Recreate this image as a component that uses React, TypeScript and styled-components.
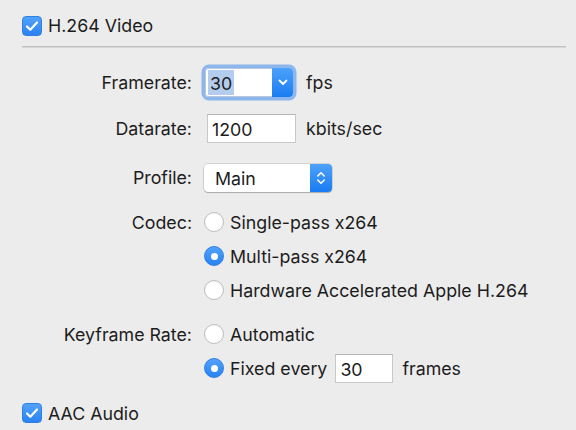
import React from 'react'
import styled, { createGlobalStyle } from 'styled-components'

const GlobalStyle = createGlobalStyle`
  html, body {
    margin: 0;
    padding: 0;
    background: #ececec;
  }
  body {
    font-family: Inter, "Liberation Sans", sans-serif;
    font-size: 17.8px;
    color: #1c1c1c;
  }
`

const Panel = styled.div`
  width: 576px;
  height: 430px;
  box-sizing: border-box;
  padding: 9px 10px 0 22px;
  display: flex;
  flex-direction: column;
  overflow: hidden;
`

const SectionHeader = styled.label<{ $top?: number }>`
  display: flex;
  align-items: center;
  gap: 6px;
  height: 34px;
  margin-top: ${p => p.$top ?? 0}px;
`

const Divider = styled.div`
  margin-top: 3px;
  height: 1px;
  background: #c2c2c2;
  box-shadow: 0 1px 0 #d6d6d6;
`

const CheckBox = styled.span`
  width: 20px;
  height: 20px;
  box-sizing: border-box;
  border-radius: 4px;
  background: linear-gradient(#52a2f9, #2a82f2);
  border: 1px solid #2f7fe6;
  display: flex;
  align-items: center;
  justify-content: center;
  flex-shrink: 0;
`

const Field = styled.div<{ $top: number }>`
  display: flex;
  margin-top: ${p => p.$top}px;
`

const FieldLabel = styled.div`
  width: 170px;
  height: 34px;
  line-height: 36px;
  text-align: right;
  flex-shrink: 0;
`

const Controls = styled.div`
  margin-left: 12px;
  display: flex;
  flex-direction: column;
`

const ControlRow = styled.div`
  display: flex;
  align-items: center;
  height: 34px;
`

const Unit = styled.span<{ $gap: number }>`
  margin-left: ${p => p.$gap}px;
`

const ComboBox = styled.div`
  display: flex;
  width: 88px;
  height: 29px;
  margin-left: 1px;
  border-radius: 4px;
  box-shadow: 0 0 0 3.5px rgba(110, 164, 238, 0.75);
`

const ComboField = styled.div`
  flex: 1;
  background: #fff;
  border: 1px solid #b8c8de;
  border-right: none;
  border-radius: 3px 0 0 3px;
  display: flex;
  align-items: center;
  padding-left: 2px;
`

const Selection = styled.span`
  background: #b4cdee;
  height: 25px;
  line-height: 27px;
  padding: 0 2px;
`

const BlueButton = styled.div<{ $w: number }>`
  width: ${p => p.$w}px;
  background: linear-gradient(#4da1fa, #1a7cf2);
  border-radius: 0 4px 4px 0;
  display: flex;
  align-items: center;
  justify-content: center;
  flex-shrink: 0;
`

const TextInput = styled.div<{ $w: number; $shift: number }>`
  width: ${p => p.$w}px;
  height: 29px;
  box-sizing: border-box;
  margin-left: ${p => p.$shift}px;
  background: #fff;
  border: 1px solid #c8c8c8;
  border-top-color: #b4b4b4;
  padding-left: 4px;
  line-height: 30px;
`

const PopUp = styled.div`
  display: flex;
  width: 128px;
  height: 28px;
  border-radius: 4px;
  background: #fff;
  box-shadow: 0 0 0 0.5px rgba(0, 0, 0, 0.22), 0 1px 1px rgba(0, 0, 0, 0.18);
  margin-top: 1px;
`

const PopUpText = styled.div`
  flex: 1;
  padding-left: 11px;
  line-height: 29px;
`

const RadioOption = styled.label`
  display: flex;
  align-items: center;
  gap: 6px;
  white-space: nowrap;
`

const RadioDot = styled.span<{ $on?: boolean }>`
  width: 20px;
  height: 20px;
  box-sizing: border-box;
  border-radius: 50%;
  flex-shrink: 0;
  display: flex;
  align-items: center;
  justify-content: center;
  background: ${p => (p.$on ? 'linear-gradient(#52a2f9, #2a82f2)' : '#fff')};
  border: 1px solid ${p => (p.$on ? '#2f7fe6' : '#bdbdbd')};
  box-shadow: ${p => (p.$on ? 'none' : 'inset 0 1px 1px rgba(0,0,0,0.04)')};

  &::after {
    content: '';
    display: ${p => (p.$on ? 'block' : 'none')};
    width: 7px;
    height: 7px;
    border-radius: 50%;
    background: #fff;
  }
`

const Check = () => (
  <CheckBox>
    <svg width="14" height="12" viewBox="0 0 14 12">
      <path d="M2 6.5l3.3 3.3L12 2.5" fill="none" stroke="#fff" strokeWidth="2.2" strokeLinecap="round" strokeLinejoin="round" />
    </svg>
  </CheckBox>
)

const Radio: React.FC<{ on?: boolean; label: string }> = ({ on, label }) => (
  <RadioOption>
    <RadioDot $on={on} />
    <span>{label}</span>
  </RadioOption>
)

export default function App() {
  return (
    <Panel>
      <GlobalStyle />
      <SectionHeader>
        <Check />
        <span>H.264 Video</span>
      </SectionHeader>
      <Divider />

      <Field $top={19}>
        <FieldLabel>Framerate:</FieldLabel>
        <Controls>
          <ControlRow>
            <ComboBox>
              <ComboField>
                <Selection>30</Selection>
              </ComboField>
              <BlueButton $w={21}>
                <svg width="10" height="7" viewBox="0 0 10 7">
                  <path d="M1.5 1.5l3.5 3.5 3.5-3.5" fill="none" stroke="#fff" strokeWidth="1.8" strokeLinecap="round" strokeLinejoin="round" />
                </svg>
              </BlueButton>
            </ComboBox>
            <Unit $gap={13}>fps</Unit>
          </ControlRow>
        </Controls>
      </Field>

      <Field $top={12}>
        <FieldLabel>Datarate:</FieldLabel>
        <Controls>
          <ControlRow>
            <TextInput $w={89} $shift={3}>1200</TextInput>
            <Unit $gap={10}>kbits/sec</Unit>
          </ControlRow>
        </Controls>
      </Field>

      <Field $top={15}>
        <FieldLabel>Profile:</FieldLabel>
        <Controls>
          <ControlRow>
            <PopUp>
              <PopUpText>Main</PopUpText>
              <BlueButton $w={22}>
                <svg width="10" height="16" viewBox="0 0 10 16">
                  <path d="M1.8 6l3.2-3.2L8.2 6M1.8 10l3.2 3.2L8.2 10" fill="none" stroke="#fff" strokeWidth="1.6" strokeLinecap="round" strokeLinejoin="round" />
                </svg>
              </BlueButton>
            </PopUp>
          </ControlRow>
        </Controls>
      </Field>

      <Field $top={11}>
        <FieldLabel>Codec:</FieldLabel>
        <Controls>
          <ControlRow>
            <Radio label="Single-pass x264" />
          </ControlRow>
          <ControlRow>
            <Radio on label="Multi-pass x264" />
          </ControlRow>
          <ControlRow>
            <Radio label="Hardware Accelerated Apple H.264" />
          </ControlRow>
        </Controls>
      </Field>

      <Field $top={10}>
        <FieldLabel>Keyframe Rate:</FieldLabel>
        <Controls>
          <ControlRow>
            <Radio label="Automatic" />
          </ControlRow>
          <ControlRow>
            <Radio on label="Fixed every" />
            <TextInput $w={58} $shift={8}>30</TextInput>
            <Unit $gap={9}>frames</Unit>
          </ControlRow>
        </Controls>
      </Field>

      <SectionHeader $top={11}>
        <Check />
        <span>AAC Audio</span>
      </SectionHeader>
    </Panel>
  )
}
